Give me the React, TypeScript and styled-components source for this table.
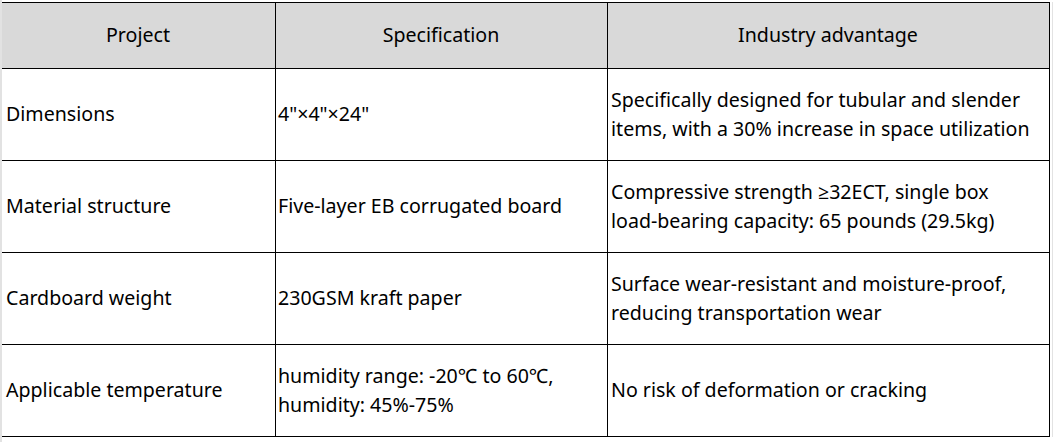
import React from "react";
import styled, { createGlobalStyle } from "styled-components";

const GlobalStyle = createGlobalStyle`
  html, body {
    margin: 0;
    padding: 0;
    background: #ffffff;
  }
  body {
    font-family: "Noto Sans", "Open Sans", sans-serif;
    color: #000000;
  }
`;

const Sheet = styled.div`
  width: 1056px;
  height: 442px;
  box-sizing: border-box;
  border-left: 2px solid #e2e2e2;
  padding-top: 2px;
`;

const Grid = styled.div`
  display: grid;
  grid-template-columns: 274px 332px 442px;
  grid-template-rows: 66px repeat(4, 92px);
  width: 1048px;
  border-top: 1px solid #000;
  box-shadow: 2px 0 0 #ffffff, 3px 0 0 #e2e2e2;
`;

const Cell = styled.div<{ $header?: boolean; $pad: number }>`
  box-sizing: border-box;
  display: flex;
  align-items: center;
  justify-content: ${(p) => (p.$header ? "center" : "flex-start")};
  padding-left: ${(p) => (p.$header ? 0 : p.$pad)}px;
  padding-right: 1px;
  border-right: 1px solid #000;
  border-bottom: 1px solid #000;
  background: ${(p) => (p.$header ? "#d9d9d9" : "#ffffff")};
  font-size: 19.6px;
  line-height: 28.5px;
  white-space: pre-line;
`;

interface Row {
  project: string;
  spec: string;
  advantage: string;
}

const HEADERS = ["Project", "Specification", "Industry advantage"];
const PADS = [4, 2, 3];

const ROWS: Row[] = [
  {
    project: "Dimensions",
    spec: "4\"×4\"×24\"",
    advantage:
      "Specifically designed for tubular and slender\nitems, with a 30% increase in space utilization",
  },
  {
    project: "Material structure",
    spec: "Five-layer EB corrugated board",
    advantage:
      "Compressive strength ≥32ECT, single box\nload-bearing capacity: 65 pounds (29.5kg)",
  },
  {
    project: "Cardboard weight",
    spec: "230GSM kraft paper",
    advantage:
      "Surface wear-resistant and moisture-proof,\nreducing transportation wear",
  },
  {
    project: "Applicable temperature",
    spec: "humidity range: -20℃ to 60℃,\nhumidity: 45%-75%",
    advantage: "No risk of deformation or cracking",
  },
];

const App: React.FunctionComponent = () => (
  <>
    <GlobalStyle />
    <Sheet>
      <Grid>
        {HEADERS.map((h) => (
          <Cell $header $pad={0} key={h}>
            {h}
          </Cell>
        ))}
        {ROWS.map((row) => (
          <React.Fragment key={row.project}>
            <Cell $pad={PADS[0]}>{row.project}</Cell>
            <Cell $pad={PADS[1]}>{row.spec}</Cell>
            <Cell $pad={PADS[2]}>{row.advantage}</Cell>
          </React.Fragment>
        ))}
      </Grid>
    </Sheet>
  </>
);

export default App;
